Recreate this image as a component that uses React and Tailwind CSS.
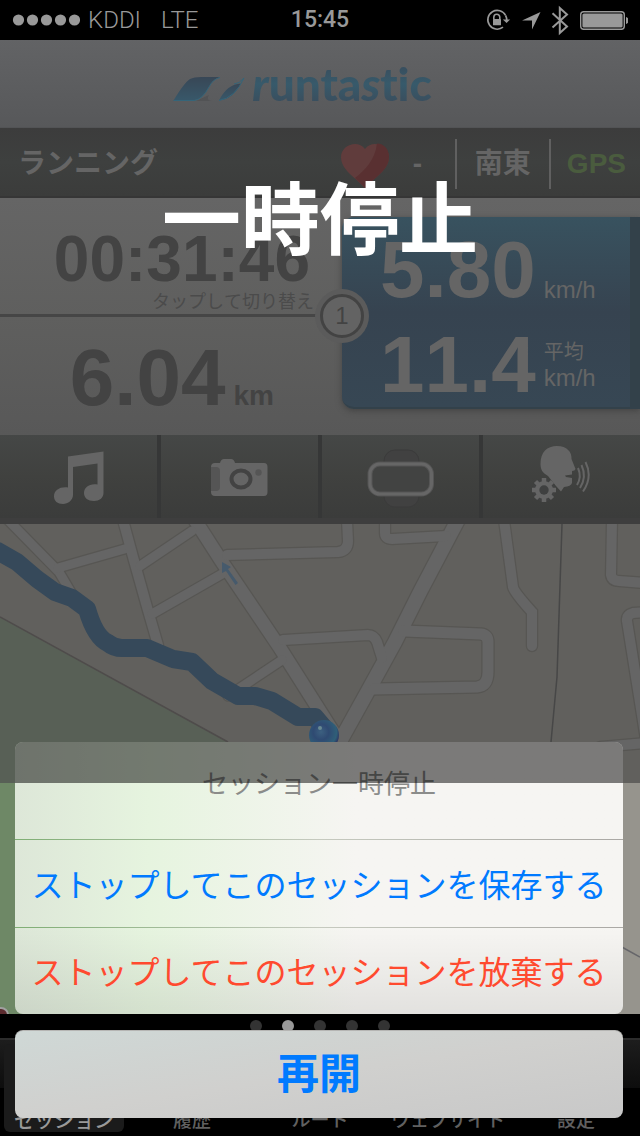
const roads = [
  { w: 13, d: "M195 520L222 562L280 648L330 727L345 750" },
  { w: 14, d: "M460 516L420 592L395 642L363 700L333 754" },
  { w: 9, d: "M8 520L59 572L72 594" },
  { w: 9, d: "M58 568L128 548" },
  { w: 10, d: "M123 520L133 557L147 607L158 645" },
  { w: 9, d: "M140 566L192 531" },
  { w: 9, d: "M152 614L222 574" },
  { w: 10, d: "M227 555L338 552Q348 551 348 541L347 520" },
  { w: 10, d: "M283 640L368 635Q374 635 377 642L382 658" },
  { w: 9, d: "M228 696L282 660" },
  { w: 10, d: "M385 520V533Q385 539 392 539L446 536" },
  { w: 11, d: "M404 631L481 634Q488 635 488 642V672Q488 686 477 687L374 689" },
  { w: 10, d: "M504 520L513 587Q514 592 532 612V646" },
  { w: 10, d: "M612 520L611 575Q612 581 619 581L645 583" },
  { w: 10, d: "M645 612L633 613Q626 615 627 621L646 740" },
  { w: 10, d: "M600 747L645 743" },
];

const ROUTE =
  "M-4 550L17 562L37 579L55 592L72 598L87 609Q95 637 108 643Q114 648 122 648H147L173 659L192 662L212 681L238 696H255L272 701L298 717H315L326 730";

function StatusBar() {
  return (
    <div className="grid h-10 grid-cols-3 items-center bg-black px-3 text-2xl text-[#999] font-[Roboto,sans-serif]">
      <div className="flex items-center font-light">
        <svg className="h-3 w-17" viewBox="0 0 68 12" fill="currentColor" aria-hidden="true">
          {[6.5, 20.5, 34.5, 48.5, 62.5].map((x) => (
            <circle key={x} cx={x} cy="6" r="5.6" />
          ))}
        </svg>
        <span className="ml-2">KDDI</span>
        <span className="ml-5">LTE</span>
      </div>
      <div className="text-center text-[23px] font-medium">15:45</div>
      <div className="flex items-center justify-end">
        <svg className="h-8 w-36" viewBox="484 4 144 32" aria-hidden="true">
          <g fill="none" stroke="#999" strokeWidth="1.6">
            <path d="M505.6 15.5A9.4 9.4 0 1 0 503 27.2" />
            <path d="M505.6 15.5Q507 18 506.8 21" />
            <path d="M493.8 19.5v-2.2a3 3 0 0 1 6 0v2.2" />
            <path d="M552.5 13.2L567 26.5L559.8 33V8L567 14.5L552.5 27.5" strokeWidth="2" />
            <rect x="580.7" y="11.7" width="43.6" height="17.6" rx="3" strokeWidth="1.4" />
          </g>
          <g fill="#999">
            <path d="M502.8 19.4h7.4L506.6 23z" />
            <rect x="493" y="19" width="8" height="6.3" rx="0.6" />
            <path d="M540.5 12L532 29.6V20.4H522z" />
            <rect x="582.4" y="13.4" width="40.2" height="14.2" rx="1.5" />
            <path d="M626 17q2.8 1 2.8 3.5T626 24z" />
          </g>
        </svg>
      </div>
    </div>
  );
}

function Header() {
  return (
    <header className="flex h-22 items-center justify-center border-b border-[#525355] bg-linear-to-b from-[#626365] to-[#57585a] pr-8">
      <svg className="mt-2 h-7 w-20 shrink-0" viewBox="174 74 80 28" aria-hidden="true">
        <defs>
          <linearGradient id="leaf" x1="0" y1="0" x2="0" y2="1">
            <stop offset="0" stopColor="#384756" />
            <stop offset="1" stopColor="#38586a" />
          </linearGradient>
        </defs>
        <path d="M198 101L211 95Q207 101 216 101z" fill="#525355" />
        <path d="M175.500 100.500Q186 83 192 79Q196 77 203 77H222Q215 79 211 87Q204 100 196 100.500z" fill="url(#leaf)" />
        <path d="M175.500 100.500H196Q204 100 211 87Q215 79 222 77.500" fill="none" stroke="#356579" strokeWidth="1" />
        <path d="M221 100.500Q229 84 243 83.500Q235 99 221 100.500z" fill="url(#leaf)" />
        <path d="M221 100.500Q237 98 246 78Q241 84 236 84" fill="none" stroke="#356579" strokeWidth="1" />
      </svg>
      <h1 className="bg-linear-to-b from-[#384756] via-[#375a6b] to-[#3a4857] bg-clip-text pr-1 text-[46px] leading-[56px] font-black text-transparent [font-variant-ligatures:none] font-[Lato,sans-serif]">
        <span className="italic">r</span>unta<span className="italic">s</span>tic
      </h1>
    </header>
  );
}

function InfoBar() {
  return (
    <div className="flex h-[70px] items-center border-b-2 border-[#363636] bg-linear-to-b from-[#3c3c3c] via-[#3e403f] to-[#3b3c3b] pt-1 pr-3.5 pl-[18px] text-[28px] font-bold text-[#656565]">
      <span className="flex-1">ランニング</span>
      <svg className="mt-1 h-12 w-12" viewBox="0 0 48 48" aria-hidden="true">
        <path d="M24 46C14 35 0 28 0 15C0 3 17-3 24 7C31-3 48 3 48 15C48 28 34 35 24 46z" fill="#603c3c" />
        <path d="M36 1.500C34 18 24 28 14 36L24 46C34 35 48 28 48 15C48 6 42 1.500 36 1.500z" fill="#593031" />
      </svg>
      <span className="w-[66px] pl-6 leading-none">-</span>
      <span className="flex h-[50px] items-center border-x-2 border-[#606060] px-[18px]">南東</span>
      <span className="pl-4 text-[#4a5c3e]">GPS</span>
    </div>
  );
}

function Stats() {
  return (
    <section className="relative grid h-[237px] grid-cols-[342fr_298fr] bg-linear-to-b from-[#656565] via-[#5f5f5e] to-[#585858] text-[#434343] [font-kerning:none]">
      <div className="flex flex-col">
        <button type="button" className="flex h-[119px] flex-col items-end border-b-3 border-[#464646] pt-7 pr-7">
          <span className="pr-1 text-[64px] leading-[66px] font-bold">00:31:46</span>
          <span className="text-[18px] leading-5 text-[#4b4b4b]">タップして切り替え</span>
        </button>
        <div className="flex flex-1 items-baseline justify-end gap-2 pt-4 pr-[68px] font-bold">
          <span className="text-[80px] leading-[90px]">6.04</span>
          <span className="text-[28px]">km</span>
        </div>
      </div>
      <div className="flex flex-col pt-[19px] pb-[26px] text-[#656565]">
        <div className="grid flex-1 grid-rows-2 rounded-l-xl border-r-10 border-b-2 border-[#33414a] bg-linear-to-b from-[#38525f] via-[#364350] to-[#374754] pl-[38px] shadow-[0_2px_6px_#444]">
          <div className="flex items-end gap-2">
            <span className="text-[80px] leading-[84px] font-bold">5.80</span>
            <span className="pb-2 text-2xl leading-7">km/h</span>
          </div>
          <div className="flex items-end gap-2">
            <span className="text-[80px] leading-[84px] font-bold">11.4</span>
            <span className="flex flex-col pb-4 text-2xl leading-[26px]">
              <span className="text-[20px]">平均</span>
              <span>km/h</span>
            </span>
          </div>
        </div>
      </div>
      <span className="absolute top-[91px] left-[342px] flex size-[54px] -translate-x-1/2 items-center justify-center rounded-full bg-[#5b5b5b]">
        <span className="flex size-11 items-center justify-center rounded-full border-3 border-[#434343] bg-[#636363] text-2xl">1</span>
      </span>
    </section>
  );
}

function MusicIcon() {
  return (
    <svg className="h-16 w-16" viewBox="48 446 64 64" fill="#656565" aria-hidden="true">
      <path d="M69 456.500L104.500 451.500V493C104.500 498 100 501 95 501C89 501 85 498 85 493C85 487 91 483 98.500 484.500V463.500L74 467V495C74 500 69 504 64 504C58.500 504 55 501 55 496.500C55 490 61 486.500 69 487.500z" />
    </svg>
  );
}

function CameraIcon() {
  return (
    <svg className="h-16 w-16" viewBox="208 446 64 64" aria-hidden="true">
      <path d="M215 463H220Q221 459 224 459H231Q234 459 235 463H264Q267.500 463 267.500 467V492Q267.500 496 264 496H215Q211 496 211 492V467Q211 463 215 463z" fill="#656565" />
      <path d="M211 467H216Q220 467 220 471V487Q220 491 216 491H211z" fill="#555" />
      <ellipse cx="241" cy="479" rx="9.500" ry="8.500" fill="#656565" stroke="#434343" strokeWidth="4" />
      <circle cx="258.500" cy="472.500" r="3.200" fill="#555" />
    </svg>
  );
}

function BandIcon() {
  return (
    <svg className="h-16 w-18" viewBox="364 446 72 64" fill="none" aria-hidden="true">
      <rect x="383" y="450" width="35" height="57" rx="11" fill="#414141" stroke="#3b3b3b" />
      <rect x="369" y="464" width="61.500" height="30" rx="10" fill="#424342" stroke="#555" strokeWidth="5" />
      <rect x="369" y="464" width="61.500" height="30" rx="10" stroke="#666" strokeWidth="3" />
    </svg>
  );
}

function VoiceIcon() {
  return (
    <svg className="h-16 w-16" viewBox="528 446 64 64" aria-hidden="true">
      <path d="M538.500 464C538.500 452 545 446 555 446C565 446 570 452 569.500 459L573.500 469Q573 471 570 471V474.500L563 475.500L564 477L570 478V483Q569 486.500 562 487L559 491.500L554 486L546 476C541 473 538.500 470 538.500 464z" fill="#656565" />
      <g fill="none" stroke="#656565" strokeWidth="2">
        <path d="M576 468Q580 477 575 485" />
        <path d="M579.500 465Q585 477 578 488" />
        <path d="M583.500 462Q591 477 581 491.500" />
      </g>
      <circle cx="542" cy="490" r="11.500" fill="#404141" />
      <g stroke="#656565" strokeWidth="4.500">
        <path d="M542 478V502M530 490H554M533.500 481.500L550.500 498.500M550.500 481.500L533.500 498.500" />
      </g>
      <circle cx="542" cy="490" r="9" fill="#656565" />
      <circle cx="542" cy="490" r="4.700" fill="#3f4040" />
    </svg>
  );
}

function Toolbar() {
  const items = [
    ["音楽", MusicIcon],
    ["カメラ", CameraIcon],
    ["バンド", BandIcon],
    ["音声設定", VoiceIcon],
  ];
  return (
    <nav className="grid h-[89px] grid-cols-4 gap-x-1 border-b-6 border-[#3e3e3e] bg-[#363737]">
      {items.map(([label, Icon]) => (
        <button
          key={label}
          type="button"
          aria-label={label}
          className="flex items-center justify-center bg-linear-to-b from-[#454746] via-[#40413f] to-[#3b3c3b] pt-0.5"
        >
          <Icon />
        </button>
      ))}
    </nav>
  );
}

function RouteMap() {
  return (
    <svg
      className="block h-[490px] w-full"
      viewBox="0 524 640 490"
      preserveAspectRatio="xMidYMid slice"
      role="img"
      aria-label="地図"
    >
      <defs>
        <radialGradient id="ball" cx="0.4" cy="0.4" r="0.65">
          <stop offset="0" stopColor="#3c6080" />
          <stop offset="0.4" stopColor="#2f4a72" />
          <stop offset="0.8" stopColor="#2f5f78" />
          <stop offset="1" stopColor="#2c2f5e" />
        </radialGradient>
      </defs>
      <rect y="524" width="640" height="260" fill="#61605d" />
      <path d="M0 617L228 742L300 783H0z" fill="#586056" />
      <path d="M0 617L228 742" stroke="#4f4c4b" strokeWidth="1.500" />
      <rect y="783" width="640" height="231" fill="#96948d" />
      <path d="M0 783H300V1014H0z" fill="#6e8866" />
      <g fill="none" stroke="#575653">
        {roads.map((r) => (
          <path key={r.d} d={r.d} strokeWidth={r.w + 2.5} strokeLinecap="round" />
        ))}
      </g>
      <g fill="none" stroke="#656565">
        {roads.map((r) => (
          <path key={r.d} d={r.d} strokeWidth={r.w} strokeLinecap="round" />
        ))}
      </g>
      <path d="M562 524L557 677L551 742" fill="none" stroke="#474747" strokeWidth="1.500" />
      <path d="M620 946L640 957" stroke="#66666a" strokeWidth="1.500" />
      <path d="M222 562L231 567L228 569L238 583L235.500 585L226 571L222 573z" fill="#465a6c" />
      <path d={ROUTE} fill="none" stroke="#36495a" strokeWidth="18" strokeLinejoin="round" />
      <circle cx="324" cy="735" r="15" fill="url(#ball)" />
      <circle cx="320" cy="728" r="2" fill="#698a92" />
      <circle cx="1" cy="1015" r="7" fill="#5b2b2e" stroke="#a0a0a0" strokeWidth="2" />
    </svg>
  );
}

function TabBar() {
  const tabs = ["セッション", "履歴", "ルート", "ウェブサイト", "設定"];
  return (
    <footer className="bg-black">
      <div className="flex h-6 items-center justify-center gap-5">
        {[0, 1, 2, 3, 4].map((i) => (
          <span key={i} className={i === 1 ? "size-3 rounded-full bg-[#999]" : "size-3 rounded-full bg-[#333]"} />
        ))}
      </div>
      <nav className="grid h-[98px] grid-cols-5 border-t-2 border-[#2c2c2c] bg-linear-to-b from-[#1d1d1d] from-0% via-[#0d0d0d] via-50% to-black to-50%">
        {tabs.map((tab, i) => (
          <a
            key={tab}
            href="#"
            className={
              i === 0
                ? "m-1 flex items-end justify-center rounded-md bg-[#1b1b1b] text-[20px] leading-[22px] font-medium whitespace-nowrap text-[#999]"
                : "m-1 flex items-end justify-center text-[19px] leading-[22px] font-medium whitespace-nowrap text-[#606060]"
            }
          >
            {tab}
          </a>
        ))}
      </nav>
    </footer>
  );
}

function ActionSheet() {
  return (
    <div
      role="dialog"
      aria-labelledby="sheet-title"
      className="absolute inset-x-0 bottom-[18px] flex flex-col gap-4 pr-[17px] pl-[15px]"
    >
      <div className="relative overflow-hidden rounded-lg bg-linear-to-r from-[#dde7d8] from-0% via-[#e6f4df] via-22% to-[#f6f5f2] to-56%">
        <h3 id="sheet-title" className="flex h-[97px] justify-center pt-[26px] text-[26px] leading-8 text-[#8b8c8a]">
          セッション一時停止
        </h3>
        <div className="h-px bg-linear-to-r from-[#7fae74] via-[#c6cabf] to-[#aaa8a4]" />
        <button type="button" className="block h-[87px] w-full pt-1 text-[32px] whitespace-nowrap text-[#007aff]">
          ストップしてこのセッションを保存する
        </button>
        <div className="h-px bg-linear-to-r from-[#7fae74] via-[#c6cabf] to-[#aaa8a4]" />
        <button
          type="button"
          className="block h-[86px] w-full bg-linear-to-b from-transparent to-black/8 pt-1 text-[32px] whitespace-nowrap text-[#ff4a2f]"
        >
          ストップしてこのセッションを放棄する
        </button>
        <div className="pointer-events-none absolute inset-x-0 top-0 h-[41px] bg-black/50" />
      </div>
      <button
        type="button"
        className="h-[88px] rounded-lg border-t border-[#b5b5b3] bg-linear-to-br from-[#cfd8d6] via-[#d0d0ce] to-[#c8c8c8] text-[42px] leading-none font-bold text-[#007aff]"
      >
        再開
      </button>
    </div>
  );
}

export default function App() {
  return (
    <main className="relative overflow-hidden bg-black font-['Liberation_Sans','Noto_Sans_CJK_JP',sans-serif]" lang="ja">
      <StatusBar />
      <Header />
      <InfoBar />
      <Stats />
      <Toolbar />
      <RouteMap />
      <TabBar />
      <h2 className="absolute inset-x-0 top-[174px] text-center text-[79px] leading-[96px] font-bold text-white">
        一時停止
      </h2>
      <ActionSheet />
    </main>
  );
}
